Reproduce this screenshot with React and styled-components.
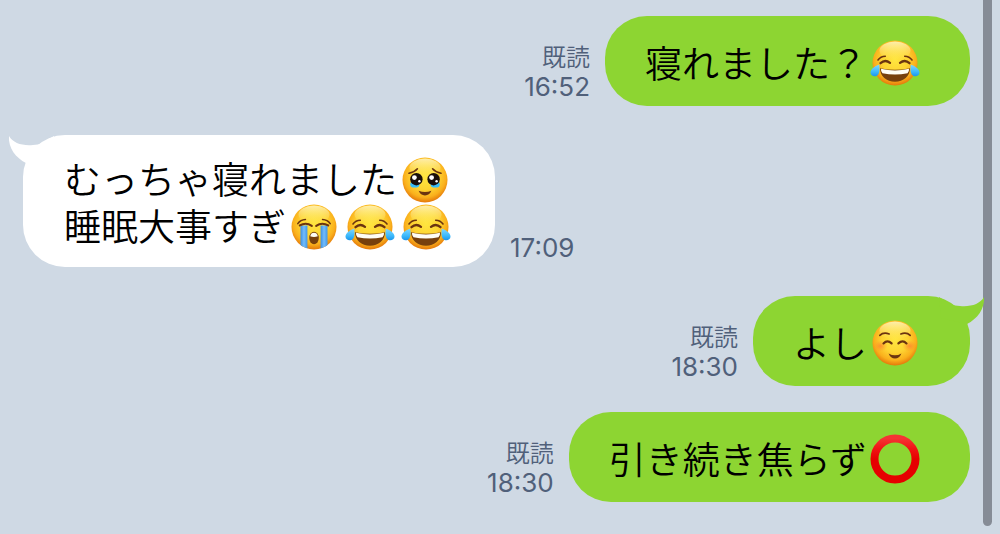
import React from 'react';
import styled, { createGlobalStyle } from 'styled-components';

const GlobalStyle = createGlobalStyle`
  * {
    box-sizing: border-box;
  }

  body {
    margin: 0;
    background: #cfd9e4;
  }
`;

const brown = '#6b3410';

const Face = ({ label, children }) => (
  <Emoji viewBox="0 0 50 50" role="img" aria-label={label}>
    <defs>
      <radialGradient id="skin" cx="50%" cy="42%" r="58%">
        <stop offset="0" stopColor="#ffe640" />
        <stop offset="0.5" stopColor="#fed432" />
        <stop offset="0.8" stopColor="#fab01c" />
        <stop offset="1" stopColor="#e4780a" />
      </radialGradient>
      <linearGradient id="shine" x1="0" y1="0" x2="0" y2="1">
        <stop offset="0" stopColor="#fffbd0" stopOpacity="0.8" />
        <stop offset="1" stopColor="#fff17a" stopOpacity="0" />
      </linearGradient>
      <linearGradient id="drop" x1="0" y1="0" x2="0" y2="1">
        <stop offset="0" stopColor="#7fd6ff" />
        <stop offset="0.6" stopColor="#3db9fb" />
        <stop offset="1" stopColor="#1b95ec" />
      </linearGradient>
      <linearGradient id="stream" x1="0" y1="0" x2="1" y2="0">
        <stop offset="0" stopColor="#3a8fe2" />
        <stop offset="0.5" stopColor="#74bcfa" />
        <stop offset="1" stopColor="#4197e6" />
      </linearGradient>
      <radialGradient id="blush">
        <stop offset="0" stopColor="#ff7a30" stopOpacity="0.7" />
        <stop offset="1" stopColor="#ff8a30" stopOpacity="0" />
      </radialGradient>
      <clipPath id="head">
        <circle cx="25" cy="25" r="22.5" />
      </clipPath>
    </defs>
    <circle cx="25" cy="25" r="22.5" fill="url(#skin)" />
    <ellipse cx="25" cy="12.5" rx="15.5" ry="9" fill="url(#shine)" />
    {children}
  </Emoji>
);

const Strokes = ({ d, width = 1.8 }) => (
  <path
    d={d}
    fill="none"
    stroke={brown}
    strokeWidth={width}
    strokeLinecap="round"
    strokeLinejoin="round"
  />
);

const Joy = () => (
  <Face label="うれし泣き">
    <Strokes d="M8 22Q10.5 18.3 15.3 18.2M34.7 18.2Q39.5 18.3 42 22" width={1.6} />
    <Strokes d="M10.5 25.2Q15 21 20 24.8M30 24.8Q35 21 39.5 25.2" width={2.3} />
    <path
      d="M10 30.2Q25 33.5 40 30.2C40 38 33.5 43.8 25 43.8S10 38 10 30.2Z"
      fill="#77400d"
    />
    <path
      d="M11 30.8Q25 34 39 30.8Q39.4 34 37.5 35.2Q25 37.8 12.5 35.2Q10.6 34 11 30.8Z"
      fill="#fffdf5"
    />
    <path
      d="M9.2 26.8C4.5 28.2 0.4 31.2 0.5 34.8C0.7 38.6 6 39.7 8.3 36.4C10 33.8 9.6 29.8 9.2 26.8Z"
      fill="url(#drop)"
    />
    <path
      d="M40.8 26.8C45.5 28.2 49.6 31.2 49.5 34.8C49.3 38.6 44 39.7 41.7 36.4C40 33.8 40.4 29.8 40.8 26.8Z"
      fill="url(#drop)"
    />
  </Face>
);

const Teary = () => (
  <Face label="うるうる">
    <Strokes d="M9 18.3Q14.5 17.2 17.4 13.8M32.6 13.8Q35.5 17.2 41 18.3" width={1.6} />
    <ellipse cx="14.8" cy="29.4" rx="4.6" ry="3.2" fill="#38bdf8" />
    <ellipse cx="35.2" cy="29.4" rx="4.6" ry="3.2" fill="#38bdf8" />
    <circle cx="16.4" cy="24.2" r="6.2" fill="#1a0f0a" />
    <circle cx="33.6" cy="24.2" r="6.2" fill="#1a0f0a" />
    <circle cx="14.4" cy="22.6" r="2.4" fill="#fff" />
    <circle cx="31.6" cy="22.6" r="2.4" fill="#fff" />
    <circle cx="19.4" cy="26.2" r="1.2" fill="#fff" />
    <circle cx="36.6" cy="26.2" r="1.2" fill="#fff" />
    <path d="M18.6 35.8Q25 38.2 31.4 35.8Q29.4 40.4 25 40.4Q20.6 40.4 18.6 35.8Z" fill={brown} />
  </Face>
);

const Sob = () => (
  <Face label="大泣き">
    <Strokes d="M8.8 21.6Q11.5 17.8 16.4 17.5M33.6 17.5Q38.5 17.8 41.2 21.6" width={1.6} />
    <g clipPath="url(#head)">
      <path d="M11.5 23.6H18.4V50H11.5Z" fill="url(#stream)" />
      <path d="M31.6 23.6H38.5V50H31.6Z" fill="url(#stream)" />
    </g>
    <Strokes d="M10.8 23.4Q17 19.8 22.8 23.8M27.2 23.8Q33 19.8 39.2 23.4" width={2.1} />
    <ellipse cx="25" cy="36" rx="4.8" ry="6.2" fill="#77400d" />
    <path d="M21.2 34.2Q22 30.8 25 30.8T28.8 34.2Q25 35.6 21.2 34.2Z" fill="#fffdf5" />
  </Face>
);

const Smile = () => (
  <Face label="にっこり">
    <ellipse cx="10.5" cy="28" rx="7" ry="5.5" fill="url(#blush)" />
    <ellipse cx="39.5" cy="28" rx="7" ry="5.5" fill="url(#blush)" />
    <Strokes d="M9.8 17.4Q13.5 13.8 19.2 16M30.8 16Q36.5 13.8 40.2 17.4" width={1.6} />
    <Strokes d="M13.5 25.4Q17.4 21.4 21.6 25.4M28.4 25.4Q32.6 21.4 36.5 25.4" width={2.2} />
    <path d="M18.6 35.4Q25 39.2 31.4 35.4Q29.4 40.4 25 40.4Q20.6 40.4 18.6 35.4Z" fill={brown} />
  </Face>
);

const Ring = () => (
  <Emoji viewBox="0 0 50 50" role="img" aria-label="まる">
    <defs>
      <linearGradient id="ring" x1="0" y1="0" x2="0" y2="1">
        <stop offset="0" stopColor="#f53434" />
        <stop offset="0.25" stopColor="#f01414" />
        <stop offset="0.5" stopColor="#e60000" />
      </linearGradient>
    </defs>
    <circle cx="25" cy="25" r="20.5" fill="none" stroke="url(#ring)" strokeWidth="8" />
  </Emoji>
);

const Message = ({ mine, read, time, tail, follow, children }) => (
  <Row $mine={mine} $follow={follow}>
    <Bubble $mine={mine}>
      {tail && (
        <Tail $mine={mine} viewBox="0 0 48 28" aria-hidden="true">
          <path d="M1 1C5 8 14 11 25 10C32 10 36 7 46 1L44 22L18 28C8 23 0 13 1 1Z" />
        </Tail>
      )}
      <Text>{children}</Text>
    </Bubble>
    <Meta $mine={mine}>
      {read && <Read>既読</Read>}
      <Time>{time}</Time>
    </Meta>
  </Row>
);

const App = () => (
  <>
    <GlobalStyle />
    <Chat>
      <Message mine read time="16:52">
        寝れました？
        <Joy />
      </Message>
      <Message tail time="17:09">
        むっちゃ寝れました
        <Teary />
        <br />
        睡眠大事すぎ
        <Sob />
        <Joy />
        <Joy />
      </Message>
      <Message mine read tail time="18:30">
        よし
        <Smile />
      </Message>
      <Message mine read follow time="18:30">
        引き続き焦らず
        <Ring />
      </Message>
      <ScrollThumb />
    </Chat>
  </>
);

const Chat = styled.main`
  position: relative;
  display: flex;
  flex-direction: column;
  min-height: 100vh;
  padding: 16px 30px 30px 23px;
  background: #cfd9e4;
  font-family: 'Noto Sans CJK JP', sans-serif;
`;

const Row = styled.article`
  display: flex;
  flex-direction: ${props => (props.$mine ? 'row-reverse' : 'row')};
  align-items: flex-end;
  gap: 15px;
  margin-top: ${props => (props.$follow ? '26px' : '29px')};

  &:first-child {
    margin-top: 0;
  }
`;

const Bubble = styled.div`
  position: relative;
  z-index: 1;
  display: flex;
  align-items: center;
  min-height: 90px;
  padding: ${props => (props.$mine ? '20px 47px 18px 40px' : '20px 41px 18px')};
  border-radius: 42px;
  background: ${props => (props.$mine ? '#8dd532' : '#ffffff')};
  color: ${props => (props.$mine ? '#8dd532' : '#ffffff')};
`;

const Tail = styled.svg`
  position: absolute;
  top: 0;
  ${props => (props.$mine ? 'right: -15px;' : 'left: -15px;')}
  width: 48px;
  height: 28px;
  fill: currentColor;
  transform: ${props => (props.$mine ? 'scaleX(-1)' : 'none')};
`;

const Text = styled.p`
  margin: 0;
  color: #000000;
  font-size: 37px;
  font-weight: 350;
  line-height: 47px;
  white-space: nowrap;
`;

const Emoji = styled.svg`
  width: 50px;
  height: 50px;
  margin: -13px 3px -5px;
  vertical-align: middle;
  overflow: visible;
`;

const Meta = styled.div`
  display: flex;
  flex-direction: column;
  align-items: ${props => (props.$mine ? 'flex-end' : 'flex-start')};
  padding-bottom: 4px;
  color: #50607a;
  line-height: 31px;
`;

const Read = styled.span`
  font-size: 24px;
  font-weight: 350;
`;

const Time = styled.time`
  font-family: Inter, sans-serif;
  font-size: 26px;
`;

const ScrollThumb = styled.div`
  position: absolute;
  top: 0;
  right: 8px;
  bottom: 8px;
  width: 9px;
  border-radius: 0 0 5px 5px;
  background: #868c96;
`;

export default App;
